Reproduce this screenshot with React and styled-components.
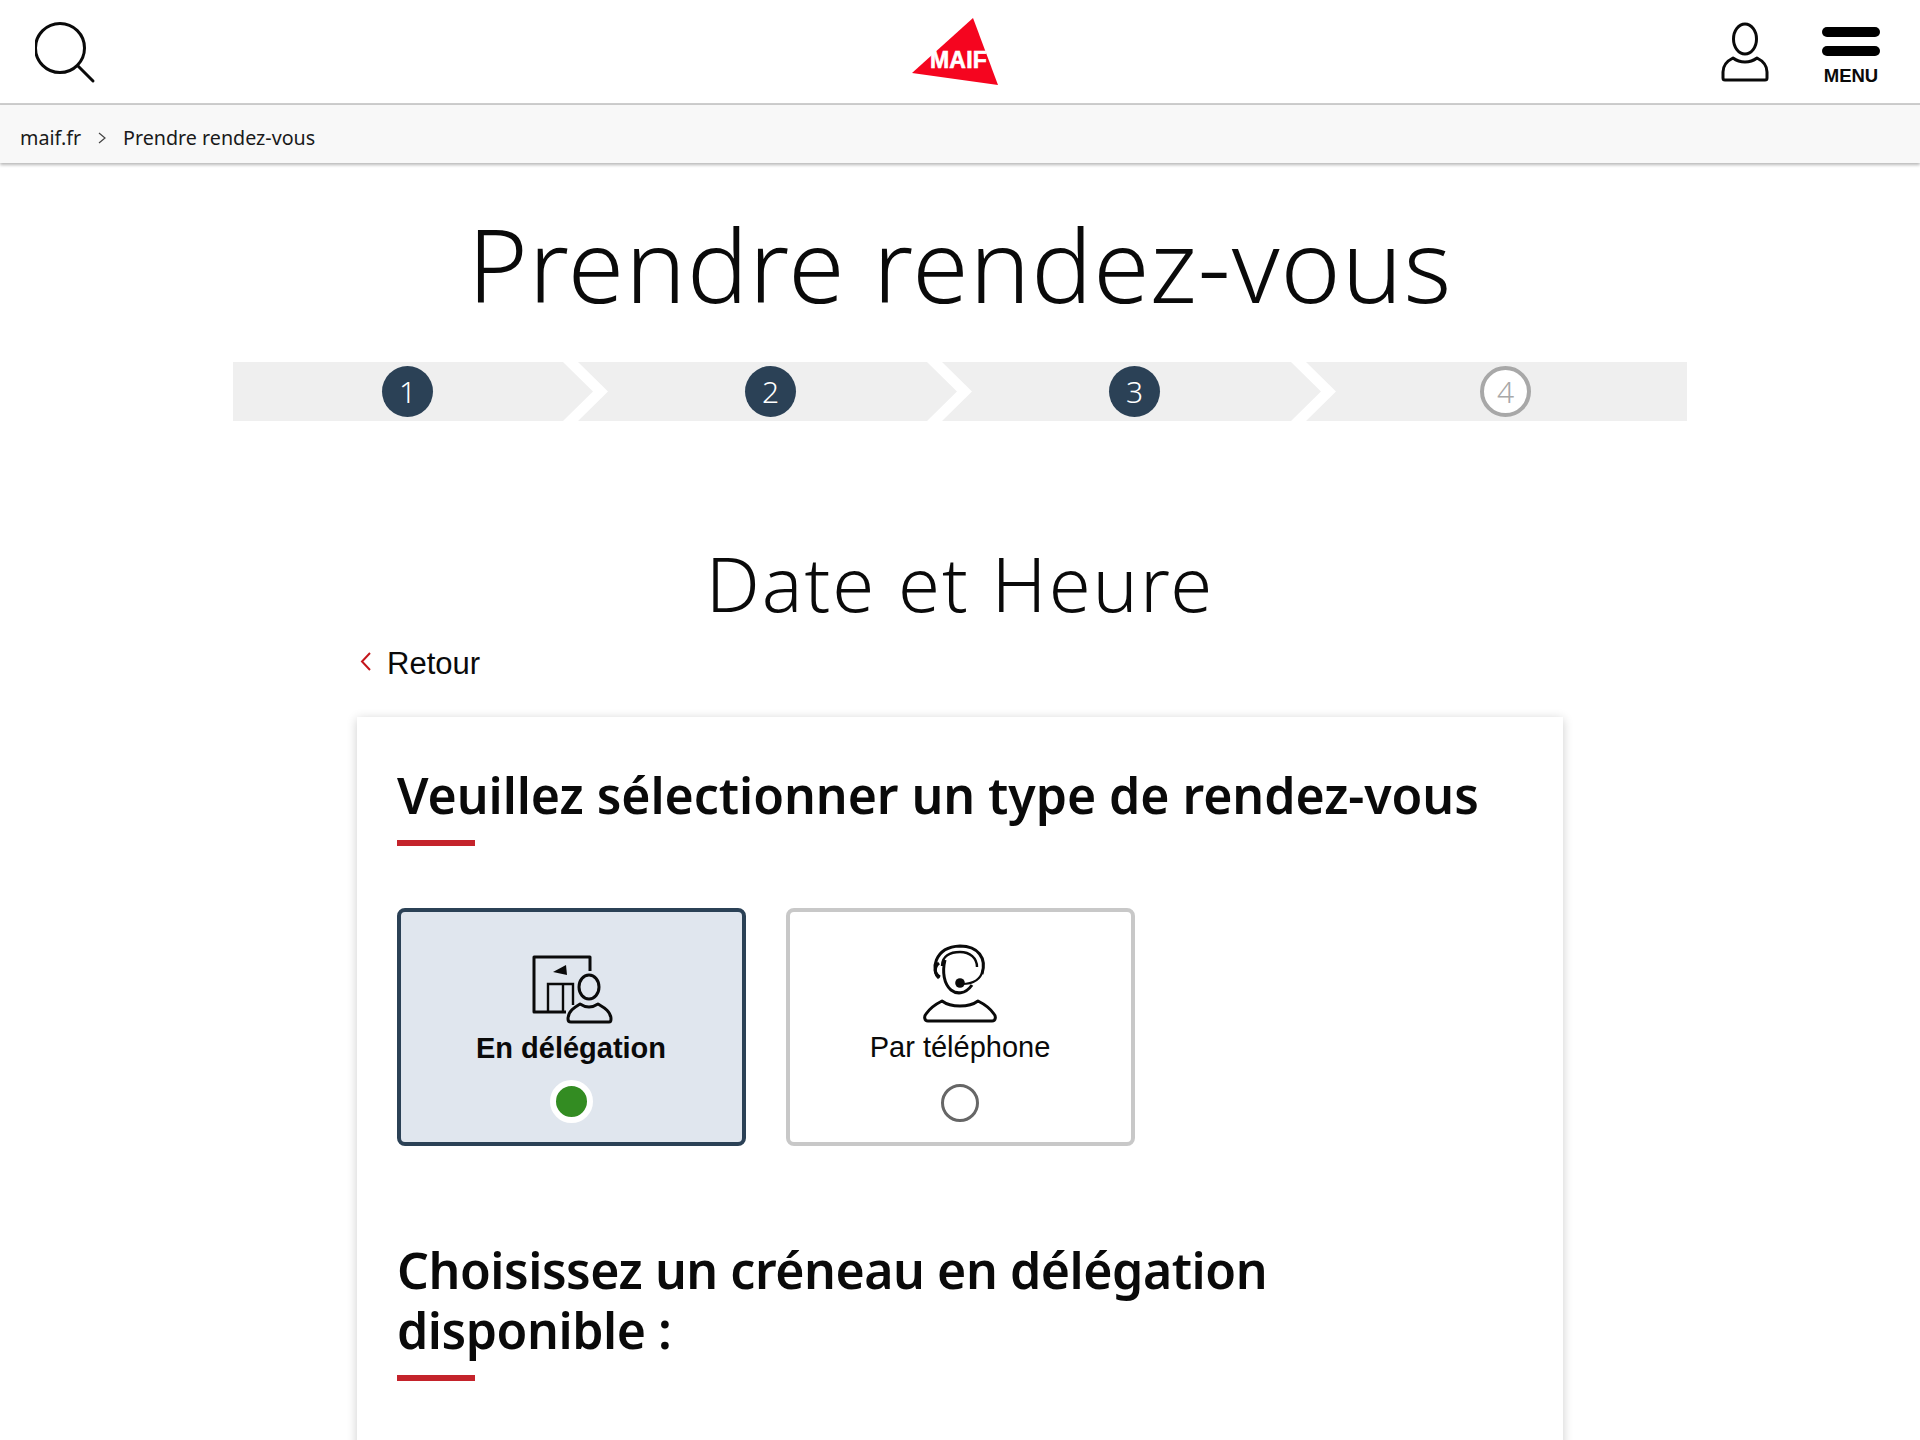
import React from "react";
import styled, { createGlobalStyle } from "styled-components";

const steps = [
  { n: 1, width: 360, offset: 149 },
  { n: 2, width: 379, offset: 167 },
  { n: 3, width: 379, offset: 167 },
  { n: 4, width: 381, offset: 174, todo: true },
];

const App = () => {
  return (
    <Page>
      <GlobalStyle />
      <Header>
        <IconButton aria-label="Rechercher">
          <svg width="70" height="70" viewBox="0 0 70 70" fill="none" stroke="#0a0a0a" strokeWidth="3">
            <circle cx="25" cy="26" r="24.5" />
            <path d="M43 44 L58 59" strokeLinecap="round" />
          </svg>
        </IconButton>
        <Logo>
          <svg width="100" height="90" viewBox="0 0 100 90">
            <polygon points="73,18 12,73 98,85" fill="#f5051f" />
            <LogoText x="30" y="68">MAIF</LogoText>
          </svg>
        </Logo>
        <HeaderRight>
          <svg width="50" height="62" viewBox="0 0 50 62" fill="none" stroke="#0a0a0a" strokeWidth="3">
            <ellipse cx="25" cy="19" rx="11.5" ry="15" />
            <path d="M13 38 C7 41 3 45 3 52 V58 Q3 60 5 60 H45 Q47 60 47 58 V52 C47 45 43 41 37 38 C33 41 29 42 25 42 C21 42 17 41 13 38 Z" strokeLinejoin="round" />
          </svg>
          <MenuButton>
            <MenuBar />
            <MenuBar />
            <MenuLabel>MENU</MenuLabel>
          </MenuButton>
        </HeaderRight>
      </Header>
      <Breadcrumb>
        <span>maif.fr</span>
        <svg width="10" height="14" viewBox="0 0 10 14" fill="none" stroke="#444" strokeWidth="1.2">
          <path d="M2 2 L8 7 L2 12" />
        </svg>
        <span>Prendre rendez-vous</span>
      </Breadcrumb>
      <Title>Prendre rendez-vous</Title>
      <Stepper>
        {steps.map((step, i) => (
          <Step key={step.n} $width={step.width} $offset={step.offset} $first={i === 0} $last={i === steps.length - 1}>
            <StepCircle $todo={step.todo}>{step.n}</StepCircle>
          </Step>
        ))}
      </Stepper>
      <SubTitle>Date et Heure</SubTitle>
      <Content>
        <BackLink>
          <svg width="14" height="22" viewBox="0 0 14 22" fill="none" stroke="#c4161c" strokeWidth="2">
            <path d="M11 2 L3 10.5 L11 19" />
          </svg>
          Retour
        </BackLink>
        <Card>
          <CardHeading>Veuillez sélectionner un type de rendez-vous</CardHeading>
          <RedRule />
          <Options>
            <Option $selected>
              <DelegationIcon width="84" height="72" viewBox="0 0 84 72" fill="none" stroke="#0a0a0a" strokeWidth="3">
                <path d="M35 59 H3 V4 H59 V18" strokeLinejoin="round" />
                <path d="M17 59 V31 H42 V52 M32 31 V59" strokeWidth="2.4" />
                <polygon points="35,12 22,19 36,22" fill="#0a0a0a" stroke="none" />
                <ellipse cx="58" cy="34" rx="10" ry="12" />
                <path d="M40 69 H78 C80 69 80 67 80 66 C80 58 72 54 67 51 C64 53 61 54 58 54 C55 54 52 53 49 51 C44 54 37 58 37 66 C37 67 37 69 40 69 Z" strokeLinejoin="round" />
              </DelegationIcon>
              <OptionLabel $selected>En délégation</OptionLabel>
              <Radio $selected />
            </Option>
            <Option>
              <svg width="80" height="84" viewBox="0 0 80 84" fill="none" stroke="#0a0a0a" strokeWidth="3">
                <path d="M19 38 C11 32 13 7 40 6 C58 6 67 18 62 34" />
                <path d="M22 26 C22 16 30 12 40 12 C50 12 57 18 57 27" strokeWidth="2.4" />
                <path d="M19 23 C14 27 14 34 20 37 M25 20 C22 32 24 44 31 50 C36 54 45 55 52 45" />
                <circle cx="40" cy="43" r="4.8" fill="#0a0a0a" stroke="none" />
                <path d="M42 44 C50 44 60 42 63 30" strokeWidth="2.2" />
                <path d="M8 81 H72 C76 81 76 76 74 74 C70 68 64 64 58 61 C54 64 46 66 40 66 C34 66 26 64 22 61 C16 64 10 68 6 74 C4 76 4 81 8 81 Z" strokeLinejoin="round" />
              </svg>
              <OptionLabel>Par téléphone</OptionLabel>
              <Radio />
            </Option>
          </Options>
          <SecondHeading>
            Choisissez un créneau en délégation
            <br />
            disponible :
          </SecondHeading>
          <RedRule />
        </Card>
      </Content>
    </Page>
  );
};

//Styles
const GlobalStyle = createGlobalStyle`
  html, body {
    margin: 0;
    padding: 0;
    background: #fff;
  }
  body {
    font-family: "Noto Sans", Arial, sans-serif;
    color: #0a0a0a;
  }
`;
const Page = styled.div`
  height: 100vh;
  overflow: hidden;
`;
const Header = styled.header`
  display: grid;
  grid-template-columns: 1fr auto 1fr;
  align-items: center;
  height: 103px;
  border-bottom: 2px solid #cdcdcd;
  padding: 0 40px 0 35px;
`;
const IconButton = styled.div`
  display: flex;
  height: 66px;
  margin-top: 6px;
  align-items: flex-start;
`;
const Logo = styled.div`
  display: flex;
  width: 100px;
  height: 103px;
  margin-left: -16px;
  svg {
    display: block;
  }
`;
const LogoText = styled.text`
  fill: #fff;
  stroke: #fff;
  stroke-width: 0.6px;
  font-family: "Liberation Sans", Arial, sans-serif;
  font-size: 23px;
  font-weight: 700;
  letter-spacing: 0.2px;
`;
const HeaderRight = styled.div`
  display: flex;
  justify-content: flex-end;
  align-items: flex-start;
  gap: 52px;
  padding-top: 20px;
  height: 83px;
`;
const MenuButton = styled.div`
  display: flex;
  flex-direction: column;
  align-items: center;
  width: 58px;
  padding-top: 7px;
  gap: 9px;
`;
const MenuBar = styled.span`
  display: block;
  width: 58px;
  height: 10px;
  border-radius: 5px;
  background: #000;
`;
const MenuLabel = styled.span`
  font-family: "Liberation Sans", Arial, sans-serif;
  font-size: 18.5px;
  font-weight: 700;
  line-height: 20px;
  margin-top: 1px;
`;
const Breadcrumb = styled.nav`
  display: flex;
  align-items: center;
  gap: 16px;
  height: 58px;
  padding: 7px 20px 0;
  background: #f8f8f8;
  box-shadow: 0 2px 3px rgba(0, 0, 0, 0.28);
  font-size: 19.7px;
  line-height: 1;
  color: #1a1a1a;
  box-sizing: border-box;
  position: relative;
`;
const Title = styled.h1`
  margin: 42px 0 0;
  text-align: center;
  font-size: 102px;
  line-height: 118px;
  font-weight: 300;
  letter-spacing: 1px;
`;
const Stepper = styled.div`
  display: flex;
  width: 1454px;
  margin: 39px auto 0;
`;
const Step = styled.div`
  display: flex;
  align-items: center;
  box-sizing: border-box;
  width: ${(p) => p.$width}px;
  height: 59px;
  flex: none;
  padding-left: ${(p) => p.$offset}px;
  margin-left: ${(p) => (p.$first ? 0 : -15)}px;
  background: #efefef;
  clip-path: polygon(
    0 0,
    ${(p) => (p.$last ? "100% 0, 100% 100%" : "calc(100% - 30px) 0, 100% 50%, calc(100% - 30px) 100%")},
    0 100%,
    ${(p) => (p.$first ? "0 100%" : "30px 50%")}
  );
`;
const StepCircle = styled.span`
  display: flex;
  align-items: center;
  justify-content: center;
  box-sizing: border-box;
  width: 51px;
  height: 51px;
  border-radius: 50%;
  font-size: 30px;
  font-weight: 300;
  background: ${(p) => (p.$todo ? "#fff" : "#2b4156")};
  color: ${(p) => (p.$todo ? "#a8a8a8" : "#fff")};
  border: ${(p) => (p.$todo ? "4px solid #a8a8a8" : "none")};
`;
const SubTitle = styled.h2`
  margin: 118px 0 0;
  text-align: center;
  font-size: 76px;
  line-height: 88px;
  font-weight: 300;
  letter-spacing: 2px;
`;
const Content = styled.div`
  width: 1206px;
  margin: 0 auto;
`;
const BackLink = styled.div`
  display: flex;
  align-items: center;
  gap: 14px;
  margin-top: 17px;
  padding-left: 2px;
  height: 40px;
  font-family: "Liberation Sans", Arial, sans-serif;
  font-size: 31px;
  svg {
    margin-top: -5px;
  }
`;
const Card = styled.section`
  margin-top: 33px;
  height: 900px;
  padding: 48px 40px 0;
  background: #fff;
  box-shadow: 0 2px 10px rgba(0, 0, 0, 0.2);
`;
const CardHeading = styled.h3`
  margin: 0;
  font-size: 50px;
  line-height: 60px;
  font-weight: 600;
  letter-spacing: -0.05px;
`;
const RedRule = styled.div`
  width: 78px;
  height: 6px;
  margin-top: 15px;
  background: #c4232b;
`;
const SecondHeading = styled(CardHeading)`
  margin-top: 94px;
  letter-spacing: -0.45px;
`;
const Options = styled.div`
  display: flex;
  gap: 40px;
  margin-top: 62px;
  margin-left: -0.5px;
`;
const Option = styled.div`
  display: flex;
  flex-direction: column;
  align-items: center;
  box-sizing: border-box;
  width: 349px;
  height: 238px;
  padding-top: ${(p) => (p.$selected ? "41px" : "28px")};
  border: 4px solid ${(p) => (p.$selected ? "#2b4156" : "#c8c8c8")};
  border-radius: 8px;
  background: ${(p) => (p.$selected ? "#e0e6ee" : "#fff")};
  svg {
    display: block;
    flex: none;
  }
`;
const DelegationIcon = styled.svg`
  margin-left: 4px;
`;
const OptionLabel = styled.div`
  margin-top: 5px;
  font-family: "Liberation Sans", Arial, sans-serif;
  font-size: 29px;
  line-height: 36px;
  font-weight: ${(p) => (p.$selected ? 700 : 400)};
`;
const Radio = styled.span`
  display: block;
  box-sizing: border-box;
  flex: none;
  border-radius: 50%;
  width: ${(p) => (p.$selected ? "43px" : "38px")};
  height: ${(p) => (p.$selected ? "43px" : "38px")};
  margin-top: ${(p) => (p.$selected ? "14px" : "19px")};
  background: ${(p) => (p.$selected ? "#338c22" : "#fff")};
  border: ${(p) => (p.$selected ? "6px solid #fff" : "3.5px solid #666")};
`;

export default App;
